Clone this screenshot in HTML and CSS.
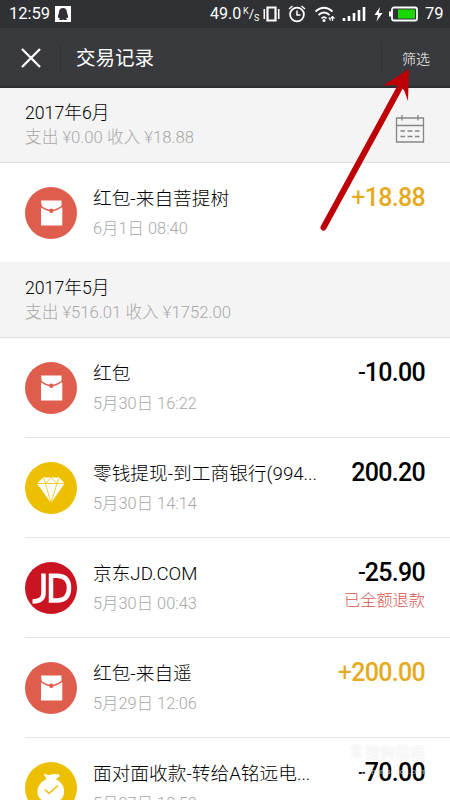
FILE: index.html
```html
<!DOCTYPE html>
<html lang="zh-CN">
<head>
<meta charset="utf-8">
<title>交易记录</title>
<link rel="stylesheet" href="styles.css">
</head>
<body>
<svg class="defs" aria-hidden="true">
  <symbol id="packet" viewBox="0 0 52 52">
    <circle cx="26" cy="26" r="26" fill="#df5d4c"/>
    <path d="M16 13.500h20.500v6.500l.8 1v17.500H16V21l.8-1z" fill="#fff"/>
    <path d="M15 18.500Q26 28.500 38 18.500" fill="none" stroke="#df5d4c" stroke-width="1.500"/>
    <circle cx="26.300" cy="23.700" r="2.200" fill="#df5d4c"/>
  </symbol>
</svg>
<div class="screen">
  <header>
    <div class="status">
      <span class="clock">12:59</span>
      <svg class="qq" viewBox="0 0 16 16"><path fill="#fff" d="M0 0h16v16H0z"/><path fill="#303134" d="M8 2C5.300 2 4 4 4 6.500L3 10v2l1-.5.800 1-.800 1.500h3l1-.500 1 .500h3l-.800-1.500.800-1 1 .500v-2l-1-3.500C12 4 10.700 2 8 2z"/></svg>
      <span class="rate">49.0</span>
      <span class="unit"><span class="kilo">K</span><span class="slash">/</span><span class="second">S</span></span>
      <svg class="signals" viewBox="0 0 158 20">
        <g fill="none" stroke="#fff" stroke-width="1.800">
          <path d="M5.500 3.500h8v13h-8z" stroke-width="2.200"/><path d="M2.300 5v10M16.700 5v10" stroke-width="1.600"/>
          <circle cx="35" cy="10.500" r="6.900"/><path d="M35 6.500v4.500h3.500M27 5l3.500-3M43 5l-3.500-3" stroke-width="1.500"/>
          <path d="M53.500 7.500Q62 0 70.500 7.500M56.500 11Q62 6 67.500 11M59.500 14.500Q62 11.800 64.500 14.500"/>
          <path d="M67 13.500l1.500 3M70.500 12v5M68.500 14.500l2-2 2 2" stroke-width="1.200"/>
          <path d="M82 14V17M87 12v5M92 9V17M97 6v11M102 3v14" stroke-width="2.600"/>
          <rect x="130" y="3.500" width="25" height="13" rx="2"/>
        </g>
        <circle cx="62" cy="16.500" r="1.500" fill="#fff"/>
        <path d="M118 3l-5.500 8h3.500l-1.500 6.500 6-8.500h-3.700z" fill="#fff"/>
        <path d="M127 7.500h3v5h-3z" fill="#fff"/><path d="M136 5.500h17v9h-17z" fill="#18d800"/>
      </svg>
      <span class="percent">79</span>
    </div>
    <div class="nav">
      <svg class="close" viewBox="0 0 20 20"><path d="M1 1l18 18M19 1L1 19" stroke="#fff" stroke-width="2.300"/></svg>
      <i class="divider"></i>
      <h1>交易记录</h1>
      <i class="divider right"></i>
      <span class="filter">筛选</span>
    </div>
  </header>

  <section class="month first">
    <div><h2>2017年6月</h2><p>支出 ¥0.00 收入 ¥18.88</p></div>
    <svg class="calendar" viewBox="0 0 30 30" fill="none" stroke="#858585" stroke-width="1.300"><path d="M1.500 4h27v24h-27zM1.500 11.500h27M7 1v5.500M23 1v5.500M5.500 17h4.500M12.500 17h5M20 17h4.500M5.500 22.500h4.500M12.500 22.500h5M20 22.500h4.500"/></svg>
  </section>
  <article>
    <svg class="icon"><use href="#packet"/></svg>
    <div class="info"><h3>红包-来自菩提树</h3><time>6月1日 08:40</time></div>
    <div class="money income"><b><i>+</i>18.88</b></div>
  </article>

  <section class="month">
    <div><h2>2017年5月</h2><p>支出 ¥516.01 收入 ¥1752.00</p></div>
  </section>
  <article>
    <svg class="icon"><use href="#packet"/></svg>
    <div class="info"><h3>红包</h3><time>5月30日 16:22</time></div>
    <div class="money"><b><i>-</i>10.00</b></div>
  </article>
  <article>
    <svg class="icon" viewBox="0 0 52 52"><circle cx="26" cy="26" r="26" fill="#ecc000"/><path d="M18 15.500h16.500l5 6L26 41 12 21.500z" fill="#fff"/><path d="M12 21.500h27.500M18 15.500l2.500 6L26 41l6-19.500 2.500-6M20.500 21.500l5.700-6 5.800 6" fill="none" stroke="#ecc000" stroke-width=".8"/></svg>
    <div class="info"><h3>零钱提现-到工商银行(994...</h3><time>5月30日 14:14</time></div>
    <div class="money"><b>200.20</b></div>
  </article>
  <article>
    <svg class="icon" viewBox="0 0 52 52"><circle cx="26" cy="26" r="26" fill="#ca1421"/><g fill="none" stroke="#fff" stroke-width="4.500"><path d="M18.500 11.500V31q0 8.500-11 8.500M26 13.700h6q12 0 12 12.300T32 38.500h-6z"/></g></svg>
    <div class="info"><h3>京东JD.COM</h3><time>5月30日 00:43</time></div>
    <div class="money"><b><i>-</i>25.90</b><small>已全额退款</small></div>
  </article>
  <article>
    <svg class="icon"><use href="#packet"/></svg>
    <div class="info"><h3>红包-来自遥</h3><time>5月29日 12:06</time></div>
    <div class="money income"><b><i>+</i>200.00</b></div>
  </article>
  <article>
    <svg class="icon" viewBox="0 0 52 52"><circle cx="26" cy="26" r="26" fill="#ecc000"/><path d="M20 12q3 1.500 6 .5 4-1 8 0 1.500 1.500-1 3l-2 2c12 5 9 21 2 21H19c-8 0-10-16 2-21v-2q-3-2-1-4.500z" fill="#fff"/><path d="M20 27.500l4 4 9-8" fill="none" stroke="#ecc000" stroke-width="1.600"/></svg>
    <div class="info"><h3>面对面收款-转给A铭远电...</h3><time>5月27日 18:58</time></div>
    <div class="money"><b><i>-</i>70.00</b></div>
  </article>
  <div class="watermark"><span><b>S</b>搜狗指南</span><small>zhinan.sogou.com</small></div>
  <svg class="pointer" viewBox="0 0 100 170"><path d="M8.500 158.500L84 20" stroke="#be0007" stroke-width="6" stroke-linecap="round"/><path d="M94 0L68 16.500 80 16 89 21 93 32z" fill="#be0007"/></svg>
</div>
</body>
</html>
```

FILE: styles.css
```css
* { box-sizing: border-box; }
body { margin: 0; font-family: Roboto, "Noto Sans CJK SC", sans-serif; }
h1, h2, h3, p { margin: 0; font-weight: 400; white-space: nowrap; }
.defs { display: none; }
.screen { position: relative; width: 450px; height: 800px; overflow: hidden; background: #fff; color: #000; }
header { height: 88px; background: #393a3e; border-bottom: 2px solid #2d2e31; color: #fff; }
.status { display: flex; align-items: center; height: 28px; padding-left: 9px; background: #303134; font-size: 16.5px; line-height: 28px; }
.clock { width: 46px; }
.qq { width: 16px; height: 16px; }
.rate { margin-left: 139px; width: 33px; font-size: 16px; }
.unit { display: flex; align-items: center; width: 19px; height: 17px; font-size: 10px; line-height: 10px; }
.unit .kilo { align-self: flex-start; font-size: 9px; }
.unit .slash { font-size: 13px; }
.unit .second { align-self: flex-end; font-size: 9px; }
.signals { width: 158px; height: 20px; }
.percent { margin-left: 5px; }
.nav { display: flex; align-items: center; height: 58px; padding: 2px 20px 0 21px; }
.close { width: 20px; height: 20px; }
.divider { width: 1px; height: 30px; margin: 0 15px 0 19px; background: #303134; }
h1 { font-size: 19.5px; line-height: 28px; }
.nav h1 { margin-top: 1px; }
.divider.right { margin: 0 20px 0 auto; }
.filter { font-size: 14px; font-weight: 300; }
.month { display: flex; justify-content: space-between; height: 76px; padding: 13px 25px 0; background: #f4f4f4; border-bottom: 1px solid #dedede; }
.month.first { height: 75px; padding-top: 12px; }
h2 { font-size: 17.7px; line-height: 26px; font-weight: 300; }
.month p { margin-top: 1px; color: #a8a8a8; font-size: 16.7px; line-height: 22px; font-weight: 300; }
.calendar { width: 30px; height: 30px; margin-top: 14px; }
article { display: flex; height: 100px; margin-left: 25px; padding: 23px 25px 0 0; border-bottom: 1px solid #e4e4e4; }
.month.first + article { height: 99px; border: 0; }
.icon { flex: none; width: 52px; height: 52px; margin: 1px 16px 0 0; }
.info { flex: 1; min-width: 0; }
h3 { font-size: 18.7px; line-height: 26px; font-weight: 300; }
time { display: block; margin-top: 7px; color: #a8a8a8; font-size: 16.4px; line-height: 20px; font-weight: 300; }
.money { display: flex; flex-direction: column; align-items: flex-end; }
.money b { font-size: 25px; line-height: 24px; font-weight: 500; letter-spacing: -.7px; }
.money i { font-style: normal; font-weight: 400; }
.money small { margin-top: 6px; color: #d85450; font-size: 16.2px; line-height: 20px; font-weight: 300; }
.income { color: #e6aa20; }
.watermark { position: absolute; left: 351px; top: 742px; width: 76px; color: rgba(255,255,255,.75); text-shadow: 0 0 2px rgba(0,0,0,.12); }
.watermark span { display: block; font-size: 15px; line-height: 20px; white-space: nowrap; }
.watermark b { margin-right: 3px; font-size: 18px; }
.watermark small { display: block; margin: 4px 0 0 10px; font-size: 8px; line-height: 10px; }
.pointer { position: absolute; left: 315px; top: 69px; width: 100px; height: 170px; }
```
